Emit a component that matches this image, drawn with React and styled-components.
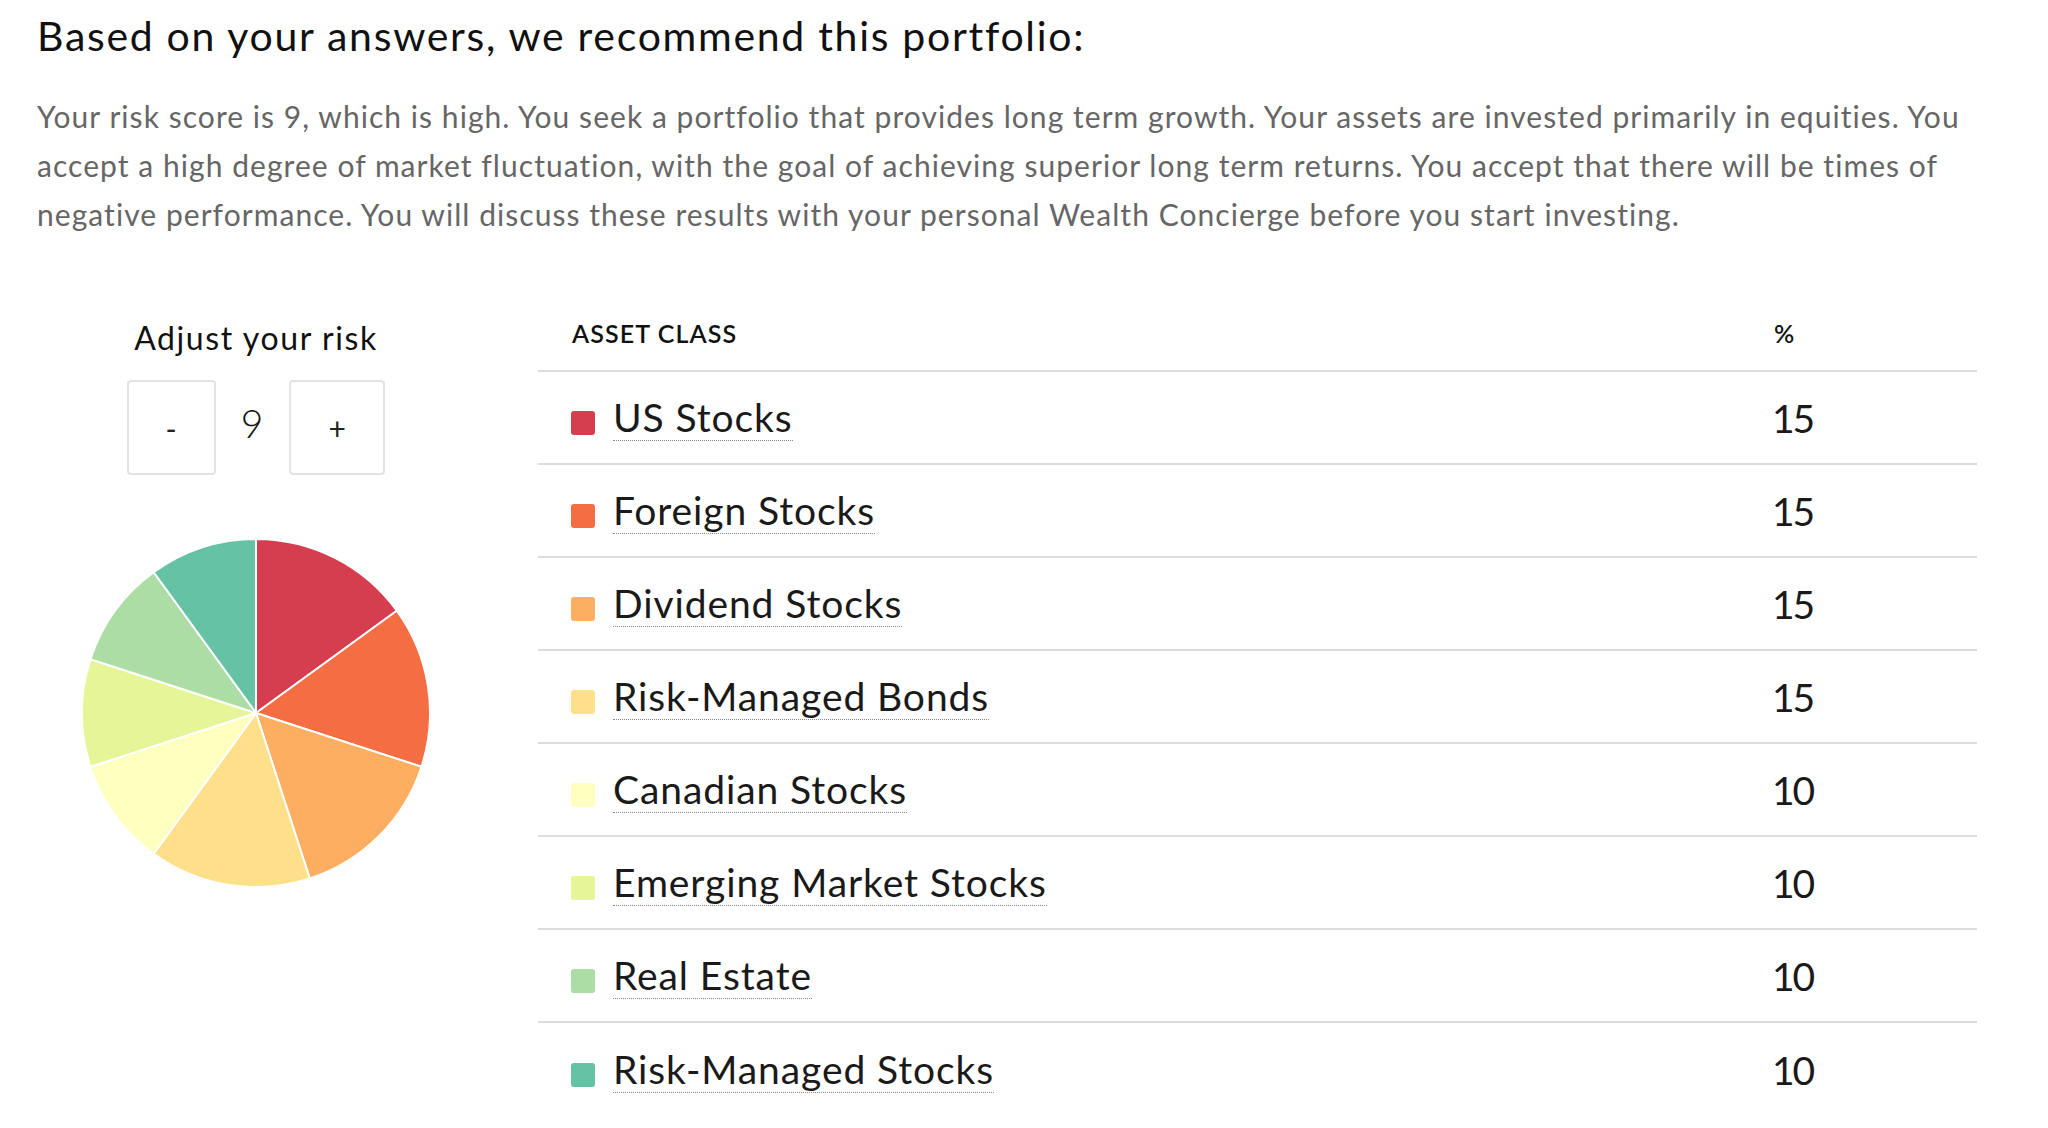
import React, { useState } from "react";
import styled, { createGlobalStyle } from "styled-components";

const GlobalStyle = createGlobalStyle`
  body {
    margin: 0;
    background: #fff;
    font-family: Lato, "Liberation Sans", sans-serif;
    color: #1a1a1a;
  }
`;

const Page = styled.div`
  padding: 12px 71px 0 37px;
`;

const Heading = styled.h1`
  margin: 0;
  font-size: 41px;
  line-height: 48px;
  font-weight: 400;
  letter-spacing: 1.7px;
  color: #111;
`;

const Intro = styled.p`
  margin: 32px 0 0;
  font-size: 30px;
  line-height: 49px;
  letter-spacing: 1.05px;
  color: #666;
`;

const Body = styled.div`
  display: grid;
  grid-template-columns: 438px 1fr;
  column-gap: 63px;
  margin-top: 61px;
`;

const RiskPanel = styled.div`
  display: flex;
  flex-direction: column;
  align-items: center;
  padding-top: 18px;
`;

const RiskTitle = styled.div`
  font-size: 32px;
  line-height: 40px;
  letter-spacing: 1.6px;
  color: #111;
`;

const Stepper = styled.div`
  display: flex;
  align-items: center;
  margin-top: 22px;
`;

const StepButton = styled.button`
  width: ${(p) => p.$w}px;
  height: 95px;
  padding: 0;
  border: 2px solid #e3e3e3;
  border-radius: 4px;
  background: #fff;
  font-family: inherit;
  font-size: 30px;
  color: #222;
  cursor: pointer;
`;

const StepValue = styled.span`
  margin: -8px 26px 0 25px;
  font-size: 39px;
  font-weight: 300;
  line-height: 1;
  color: #111;
`;

const PieWrap = styled.div`
  margin-top: 63px;
  line-height: 0;
`;

const Table = styled.div`
  display: flex;
  flex-direction: column;
`;

const HeadRow = styled.div`
  display: grid;
  grid-template-columns: 1fr 203px;
  padding: 18px 0 22px;
  border-bottom: 2px solid #ddd;
  font-size: 25px;
  line-height: 30px;
  font-weight: 600;
  letter-spacing: 1.1px;
  color: #111;
`;

const HeadCell = styled.div`
  padding-left: ${(p) => (p.$first ? "34px" : "0")};
`;

const Row = styled.div`
  display: grid;
  grid-template-columns: 1fr 203px;
  align-items: center;
  height: 93px;
  box-sizing: border-box;
  border-bottom: 2px solid #ddd;
  font-size: 39px;
  color: #1a1a1a;

  &:last-child {
    border-bottom: 0;
  }
`;

const NameCell = styled.div`
  display: flex;
  align-items: center;
  padding-left: 33px;
`;

const Swatch = styled.span`
  width: 24px;
  height: 24px;
  margin: 11px 18px 0 0;
  border-radius: 3px;
  background: ${(p) => p.$color};
`;

const Name = styled.span`
  display: inline-block;
  line-height: 1.2;
  letter-spacing: 0.9px;
  border-bottom: 1px dotted #8a8a8a;
`;

const Pct = styled.div`
  margin-left: -2px;
  letter-spacing: -2px;
`;

const assets = [
  { name: "US Stocks", pct: 15, color: "#d53e4f" },
  { name: "Foreign Stocks", pct: 15, color: "#f46d43" },
  { name: "Dividend Stocks", pct: 15, color: "#fdae61" },
  { name: "Risk-Managed Bonds", pct: 15, color: "#fee08b" },
  { name: "Canadian Stocks", pct: 10, color: "#ffffbf" },
  { name: "Emerging Market Stocks", pct: 10, color: "#e6f598" },
  { name: "Real Estate", pct: 10, color: "#abdda4" },
  { name: "Risk-Managed Stocks", pct: 10, color: "#66c2a5" },
];

function Pie({ data, size }) {
  const r = size / 2;
  const total = data.reduce((s, d) => s + d.pct, 0);
  let acc = 0;
  const point = (frac) => {
    const a = frac * Math.PI * 2;
    return [r + r * Math.sin(a), r - r * Math.cos(a)];
  };
  return (
    <svg width={size} height={size} viewBox={`-1 -1 ${size + 2} ${size + 2}`}>
      {data.map((d) => {
        const start = acc / total;
        acc += d.pct;
        const end = acc / total;
        const [x1, y1] = point(start);
        const [x2, y2] = point(end);
        const large = end - start > 0.5 ? 1 : 0;
        return (
          <path
            key={d.name}
            d={`M${r},${r} L${x1},${y1} A${r},${r} 0 ${large} 1 ${x2},${y2} Z`}
            fill={d.color}
            stroke="#fff"
            strokeWidth="2"
            strokeLinejoin="round"
          />
        );
      })}
    </svg>
  );
}

const riskText = (score) =>
  `Your risk score is ${score}, which is high. You seek a portfolio that provides long term growth. ` +
  "Your assets are invested primarily in equities. You accept a high degree of market fluctuation, " +
  "with the goal of achieving superior long term returns. You accept that there will be times of " +
  "negative performance. You will discuss these results with your personal Wealth Concierge " +
  "before you start investing.";

export default function App() {
  const [risk, setRisk] = useState(9);

  return (
    <Page>
      <GlobalStyle />
      <Heading>Based on your answers, we recommend this portfolio:</Heading>
      <Intro>{riskText(risk)}</Intro>
      <Body>
        <RiskPanel>
          <RiskTitle>Adjust your risk</RiskTitle>
          <Stepper>
            <StepButton $w={89} onClick={() => setRisk((v) => Math.max(1, v - 1))}>
              -
            </StepButton>
            <StepValue>{risk}</StepValue>
            <StepButton $w={96} onClick={() => setRisk((v) => Math.min(10, v + 1))}>
              +
            </StepButton>
          </Stepper>
          <PieWrap>
            <Pie data={assets} size={350} />
          </PieWrap>
        </RiskPanel>
        <Table>
          <HeadRow>
            <HeadCell $first>ASSET CLASS</HeadCell>
            <HeadCell>%</HeadCell>
          </HeadRow>
          {assets.map((a) => (
            <Row key={a.name}>
              <NameCell>
                <Swatch $color={a.color} />
                <Name>{a.name}</Name>
              </NameCell>
              <Pct>{a.pct}</Pct>
            </Row>
          ))}
        </Table>
      </Body>
    </Page>
  );
}
